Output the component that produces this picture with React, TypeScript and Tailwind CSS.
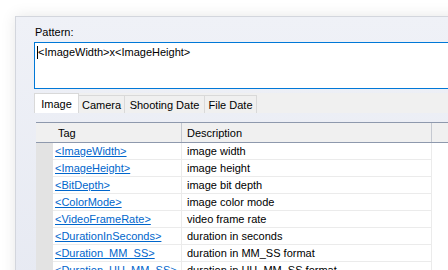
const tags = [
  ['<ImageWidth>', 'image width'],
  ['<ImageHeight>', 'image height'],
  ['<BitDepth>', 'image bit depth'],
  ['<ColorMode>', 'image color mode'],
  ['<VideoFrameRate>', 'video frame rate'],
  ['<DurationInSeconds>', 'duration in seconds'],
  ['<Duration_MM_SS>', 'duration in MM_SS format'],
  ['<Duration_HH_MM_SS>', 'duration in HH_MM_SS format'],
];

const tabs = [
  { label: 'Image', w: 'w-[45px]', active: true },
  { label: 'Camera', w: 'w-[46px]' },
  { label: 'Shooting Date', w: 'w-[80px]' },
  { label: 'File Date', w: 'w-[52px]' },
];

export default function App() {
  return (
    <div className="w-[448px] h-[270px] overflow-hidden bg-white pl-[15px] pt-[16px] font-['Liberation_Sans',Arial,sans-serif] text-[11px] leading-[14px] text-black">
      {/* dialog window */}
      <div className="w-[520px] h-[300px] border-l border-t border-[#d3d6dd] bg-gradient-to-b from-[#eff1f7] to-[#e6e9f2] pl-[18px] pt-[8px] shadow-[0_0_14px_rgba(0,0,0,0.10)]">
        <div className="mb-[3px] pl-[1px]">Pattern:</div>

        {/* pattern input */}
        <div className="h-[47px] border border-[#0078d7] bg-white pl-[2px] pt-[2px]">
          <div className="flex items-center">
            <span className="h-[13px] w-px bg-black" />
            <span>&lt;ImageWidth&gt;x&lt;ImageHeight&gt;</span>
          </div>
        </div>

        {/* tab strip */}
        <div className="mt-[4px] flex h-[20px] items-end bg-[#f0f0f0]">
          {tabs.map((t) => (
            <div
              key={t.label}
              className={
                t.active
                  ? `${t.w} flex h-[20px] items-center justify-center border border-b-0 border-[#d9d9d9] bg-white`
                  : `${t.w} flex h-[18px] items-center justify-center border border-b-0 border-l-0 border-[#d9d9d9] bg-[#f0f0f0]`
              }
            >
              {t.label}
            </div>
          ))}
        </div>

        {/* tag grid */}
        <div className="ml-[2px] mt-[9px]">
          <div className="flex h-[21px] border-y border-[#8e99ad] bg-[#f0f0f0]">
            <div className="w-[17px]" />
            <div className="flex w-[129px] items-center border-r border-[#c5c9d1] pl-[5px]">Tag</div>
            <div className="flex w-[250px] items-center border-r border-[#c5c9d1] pl-[5px]">Description</div>
            <div className="flex-1" />
          </div>
          {tags.map(([tag, desc]) => (
            <div key={tag} className="flex h-[17px]">
              <div className="w-[17px] bg-[#e3e3e3]" />
              <div className="flex w-[129px] items-center border-b border-r border-[#ebebeb] bg-white pl-[2px]">
                <span className="text-[#0066cc] underline">{tag}</span>
              </div>
              <div className="flex w-[250px] items-center border-b border-r border-[#ebebeb] bg-white pl-[5px]">
                {desc}
              </div>
              <div className="flex-1 bg-white" />
            </div>
          ))}
        </div>
      </div>
    </div>
  );
}
